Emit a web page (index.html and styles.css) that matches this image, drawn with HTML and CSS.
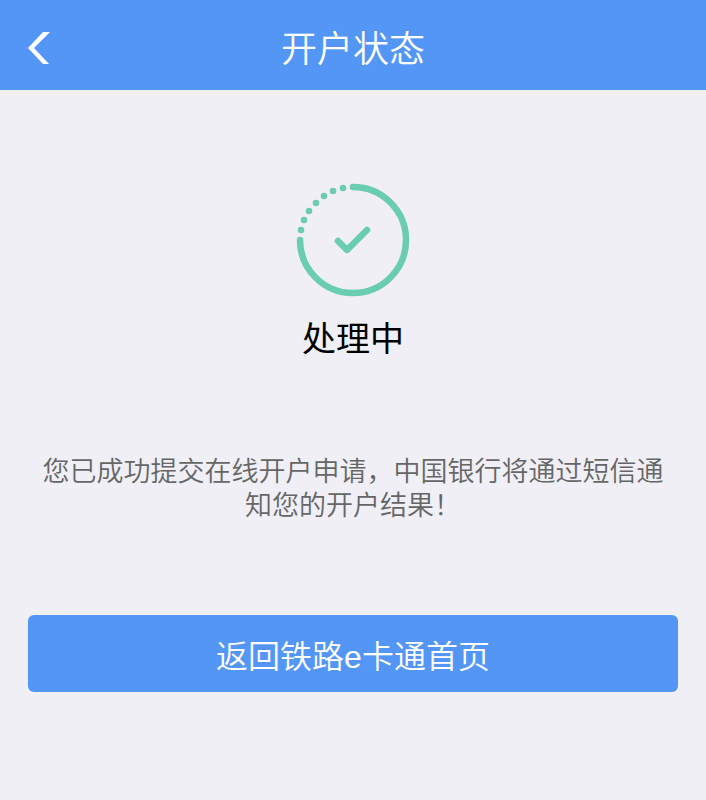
FILE: index.html
```
<!DOCTYPE html>
<html lang="zh-CN">
<head>
  <meta charset="UTF-8">
  <meta name="viewport" content="width=device-width, initial-scale=1">
  <title>开户状态</title>
  <link rel="stylesheet" href="styles.css">
</head>
<body>
  <header class="header">
    <button type="button" class="back-button" aria-label="返回">
      <svg width="24" height="34" viewBox="0 0 24 34" fill="#fff">
        <path d="M17 1 H24 L8 17 L23 33 H17 L2 17 Z"/>
      </svg>
    </button>
    <h1>开户状态</h1>
  </header>

  <main class="content">
    <div class="result">
      <svg class="result-icon" width="114" height="114" viewBox="0 0 114 114" fill="none" stroke="#6acdb0" stroke-linecap="round" stroke-linejoin="round">
        <path d="M57 4 A53 53 0 1 1 4 57" stroke-width="6.5"/>
        <path d="M42 58 L51 67 L71 47" stroke-width="6.5"/>
        <g fill="#6acdb0" stroke="none">
          <circle cx="5" cy="47" r="3.3"/>
          <circle cx="8" cy="37" r="3.3"/>
          <circle cx="13" cy="28" r="3.3"/>
          <circle cx="20" cy="20" r="3.3"/>
          <circle cx="28" cy="13" r="3.3"/>
          <circle cx="37" cy="8" r="3.3"/>
          <circle cx="47" cy="5" r="3.3"/>
        </g>
      </svg>
      <h2>处理中</h2>
    </div>

    <p class="message">您已成功提交在线开户申请，中国银行将通过短信通知您的开户结果！</p>

    <button type="button" class="primary-button">返回铁路e卡通首页</button>
  </main>
</body>
</html>
```

FILE: styles.css
```
body {
  margin: 0;
  font-family: "Liberation Sans", "Noto Sans CJK SC", sans-serif;
  color: #000;
  background: #efeff5;
}

.header {
  display: grid;
  grid-template-columns: 80px 1fr 80px;
  align-items: center;
  height: 90px;
  color: #fff;
  background: #5496f6;
}

.header h1 {
  margin: 0;
  padding-top: 10px;
  font-size: 36px;
  line-height: 52px;
  font-weight: 350;
  text-align: center;
}

.back-button {
  display: flex;
  justify-self: start;
  margin-left: 26px;
  padding: 6px 0 0;
  border: none;
  background: none;
  cursor: pointer;
}

.content {
  padding: 93px 28px 28px;
}

.result {
  display: flex;
  flex-direction: column;
  align-items: center;
}

.result h2 {
  margin: 18px 0 0;
  font-size: 34px;
  line-height: 48px;
  font-weight: 400;
}

.message {
  margin: 92px 0 0;
  padding: 0 14px;
  font-size: 27px;
  line-height: 34px;
  font-weight: 350;
  text-align: center;
  color: #666;
}

.primary-button {
  display: block;
  width: 100%;
  margin-top: 92px;
  padding: 22px 18px 14px;
  border: none;
  border-radius: 6px;
  font-family: inherit;
  font-size: 32px;
  line-height: 41px;
  font-weight: 350;
  color: #fff;
  background: #5496f6;
  cursor: pointer;
}
```
